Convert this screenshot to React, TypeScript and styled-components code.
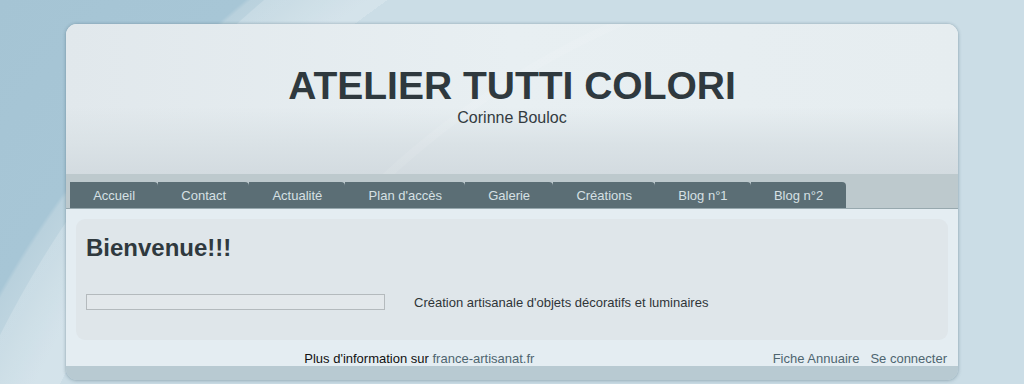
import styled, { createGlobalStyle } from "styled-components";

const GlobalStyle = createGlobalStyle`
  html, body {
    margin: 0;
    padding: 0;
  }
  body {
    height: 384px;
    overflow: hidden;
    font-family: "Liberation Sans", Arial, sans-serif;
    background-color: #cbdde6;
    background-image:
      radial-gradient(circle at 960px 820px, transparent 0 1000px, rgba(255, 255, 255, 0.18) 1000px 1075px, transparent 1076px),
      radial-gradient(circle at 900px 800px, #cbdde6 0 960px, #c3d8e2 990px, #b9d1dd 1030px, #a7c6d6 1034px, #a5c4d4 100%);
  }
`;

const navItems = [
  "Accueil",
  "Contact",
  "Actualité",
  "Plan d'accès",
  "Galerie",
  "Créations",
  "Blog n°1",
  "Blog n°2",
];

const App = () => {
  return (
    <>
      <GlobalStyle />
      <Page>
        <Card>
          <Header>
            <Title>ATELIER TUTTI COLORI</Title>
            <Subtitle>Corinne Bouloc</Subtitle>
          </Header>

          <NavBar>
            {navItems.map((item) => (
              <NavTab key={item}>{item}</NavTab>
            ))}
          </NavBar>

          <Content>
            <Panel>
              <Heading>Bienvenue!!!</Heading>
              <IntroRow>
                <ImageBox />
                <IntroText>
                  Création artisanale d'objets décoratifs et luminaires
                </IntroText>
              </IntroRow>
            </Panel>

            <Footer>
              <FooterInfo>
                Plus d'information sur <FooterLink>france-artisanat.fr</FooterLink>
              </FooterInfo>
              <FooterLinks>
                <FooterLink>Fiche Annuaire</FooterLink>
                <FooterLink>Se connecter</FooterLink>
              </FooterLinks>
            </Footer>
          </Content>

          <BottomStrip />
        </Card>
      </Page>
    </>
  );
};

export default App;

const Page = styled.div`
  padding-top: 24px;
  display: flex;
  justify-content: center;
`;

const Card = styled.div`
  width: 892px;
  border-radius: 11px;
  overflow: hidden;
  box-shadow: 0 0 3px rgba(60, 90, 105, 0.35), 0 1px 4px rgba(60, 90, 105, 0.2);
  display: flex;
  flex-direction: column;
`;

const Header = styled.div`
  height: 150px;
  box-sizing: border-box;
  padding-top: 40px;
  display: flex;
  flex-direction: column;
  align-items: center;
  background-color: #e4ebef;
  background-image:
    radial-gradient(circle at 900px 780px, transparent 0 850px, rgba(255, 255, 255, 0.08) 851px 858px, transparent 859px),
    linear-gradient(to bottom, rgba(228, 235, 239, 0) 0, rgba(228, 235, 239, 0) 55%, #dae2e6 80%, #d3dbe0 100%),
    linear-gradient(to right, #e1e8ec, #e8eff2 50%, #e6edf0);
`;

const Title = styled.h1`
  margin: 0;
  font-size: 39px;
  line-height: 44px;
  font-weight: bold;
  color: #2f393e;
`;

const Subtitle = styled.div`
  margin-top: 1px;
  font-size: 16px;
  line-height: 18px;
  color: #333b3f;
`;

const NavBar = styled.div`
  height: 35px;
  box-sizing: border-box;
  padding: 8px 0 0 4px;
  display: flex;
  align-items: flex-start;
  background: #bdc9cd;
  border-bottom: 1px solid #97a8ae;
`;

const NavTab = styled.div`
  height: 26px;
  padding: 0 23.15px;
  display: flex;
  align-items: center;
  font-size: 13px;
  color: #d6e0e4;
  background: #5b6e75;
  border-top-right-radius: 4px;
`;

const Content = styled.div`
  background: #e4edf2;
  padding: 10px 10px 0;
  display: flex;
  flex-direction: column;
`;

const Panel = styled.div`
  height: 121px;
  box-sizing: border-box;
  padding: 15px 10px 0;
  background: #dfe6ea;
  border-radius: 9px;
`;

const Heading = styled.h2`
  margin: 0;
  font-size: 24px;
  line-height: 28px;
  font-weight: bold;
  color: #2f393e;
`;

const IntroRow = styled.div`
  margin-top: 32px;
  display: flex;
  align-items: center;
  gap: 29px;
`;

const ImageBox = styled.div`
  width: 299px;
  height: 16px;
  box-sizing: border-box;
  border: 1px solid #b4babd;
  background: #e3e8eb;
`;

const IntroText = styled.span`
  font-size: 13px;
  color: #2f3538;
`;

const Footer = styled.div`
  height: 26px;
  box-sizing: border-box;
  padding-top: 11px;
  display: flex;
  align-items: flex-start;
  margin: 0 1px 0 -10px;
  font-size: 13px;
  line-height: 15px;
`;

const FooterInfo = styled.div`
  flex: 1;
  text-align: center;
  color: #111;
`;

const FooterLinks = styled.div`
  display: flex;
  gap: 11px;
`;

const FooterLink = styled.span`
  color: #4e6570;
`;

const BottomStrip = styled.div`
  height: 14px;
  background: #b8cad2;
`;
